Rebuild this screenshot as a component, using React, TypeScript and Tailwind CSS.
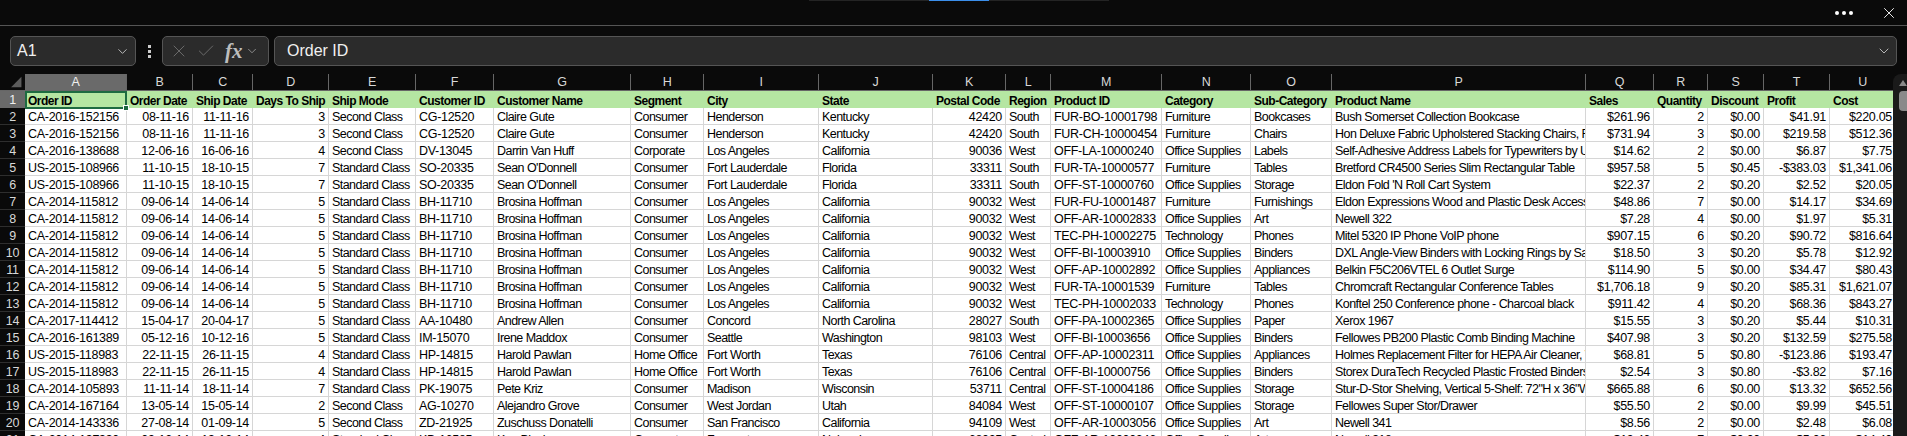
import { Check, ChevronDown, X } from "lucide-react";

const columns = [
  { label: "A", width: "w-[102px]" },
  { label: "B", width: "w-[66px]" },
  { label: "C", width: "w-[60px]" },
  { label: "D", width: "w-[76px]" },
  { label: "E", width: "w-[87px]" },
  { label: "F", width: "w-[78px]" },
  { label: "G", width: "w-[137px]" },
  { label: "H", width: "w-[73px]" },
  { label: "I", width: "w-[115px]" },
  { label: "J", width: "w-[114px]" },
  { label: "K", width: "w-[73px]" },
  { label: "L", width: "w-[45px]" },
  { label: "M", width: "w-[111px]" },
  { label: "N", width: "w-[89px]" },
  { label: "O", width: "w-[81px]" },
  { label: "P", width: "w-[254px]" },
  { label: "Q", width: "w-[68px]" },
  { label: "R", width: "w-[54px]" },
  { label: "S", width: "w-[56px]" },
  { label: "T", width: "w-[66px]" },
  { label: "U", width: "w-[66px]" },
];

const headers = [
  "Order ID", "Order Date", "Ship Date", "Days To Ship", "Ship Mode", "Customer ID", "Customer Name",
  "Segment", "City", "State", "Postal Code", "Region", "Product ID", "Category", "Sub-Category",
  "Product Name", "Sales", "Quantity", "Discount", "Profit", "Cost",
];

// columns that hold dates and numbers sit on the right of the cell
const rightAligned = [1, 2, 3, 10, 16, 17, 18, 19, 20];
const wordColumns = [4, 6, 7, 8, 9, 11, 13, 14, 15];

function cellClass(c: number) {
  if (rightAligned.includes(c)) {
    return "overflow-hidden whitespace-nowrap border-b border-r border-[#d6d6d6] bg-white px-[3px] pt-[2px] text-right";
  }
  if (wordColumns.includes(c)) {
    return "overflow-hidden whitespace-nowrap border-b border-r border-[#d6d6d6] bg-white px-[3px] pt-[2px] tracking-[-0.55px]";
  }
  return "overflow-hidden whitespace-nowrap border-b border-r border-[#d6d6d6] bg-white px-[3px] pt-[2px]";
}

const rows = [
  "CA-2016-152156|08-11-16|11-11-16|3|Second Class|CG-12520|Claire Gute|Consumer|Henderson|Kentucky|42420|South|FUR-BO-10001798|Furniture|Bookcases|Bush Somerset Collection Bookcase|$261.96|2|$0.00|$41.91|$220.05",
  "CA-2016-152156|08-11-16|11-11-16|3|Second Class|CG-12520|Claire Gute|Consumer|Henderson|Kentucky|42420|South|FUR-CH-10000454|Furniture|Chairs|Hon Deluxe Fabric Upholstered Stacking Chairs, Rounded Back|$731.94|3|$0.00|$219.58|$512.36",
  "CA-2016-138688|12-06-16|16-06-16|4|Second Class|DV-13045|Darrin Van Huff|Corporate|Los Angeles|California|90036|West|OFF-LA-10000240|Office Supplies|Labels|Self-Adhesive Address Labels for Typewriters by Universal|$14.62|2|$0.00|$6.87|$7.75",
  "US-2015-108966|11-10-15|18-10-15|7|Standard Class|SO-20335|Sean O'Donnell|Consumer|Fort Lauderdale|Florida|33311|South|FUR-TA-10000577|Furniture|Tables|Bretford CR4500 Series Slim Rectangular Table|$957.58|5|$0.45|-$383.03|$1,341.06",
  "US-2015-108966|11-10-15|18-10-15|7|Standard Class|SO-20335|Sean O'Donnell|Consumer|Fort Lauderdale|Florida|33311|South|OFF-ST-10000760|Office Supplies|Storage|Eldon Fold 'N Roll Cart System|$22.37|2|$0.20|$2.52|$20.05",
  "CA-2014-115812|09-06-14|14-06-14|5|Standard Class|BH-11710|Brosina Hoffman|Consumer|Los Angeles|California|90032|West|FUR-FU-10001487|Furniture|Furnishings|Eldon Expressions Wood and Plastic Desk Accessories|$48.86|7|$0.00|$14.17|$34.69",
  "CA-2014-115812|09-06-14|14-06-14|5|Standard Class|BH-11710|Brosina Hoffman|Consumer|Los Angeles|California|90032|West|OFF-AR-10002833|Office Supplies|Art|Newell 322|$7.28|4|$0.00|$1.97|$5.31",
  "CA-2014-115812|09-06-14|14-06-14|5|Standard Class|BH-11710|Brosina Hoffman|Consumer|Los Angeles|California|90032|West|TEC-PH-10002275|Technology|Phones|Mitel 5320 IP Phone VoIP phone|$907.15|6|$0.20|$90.72|$816.64",
  "CA-2014-115812|09-06-14|14-06-14|5|Standard Class|BH-11710|Brosina Hoffman|Consumer|Los Angeles|California|90032|West|OFF-BI-10003910|Office Supplies|Binders|DXL Angle-View Binders with Locking Rings by Samsill|$18.50|3|$0.20|$5.78|$12.92",
  "CA-2014-115812|09-06-14|14-06-14|5|Standard Class|BH-11710|Brosina Hoffman|Consumer|Los Angeles|California|90032|West|OFF-AP-10002892|Office Supplies|Appliances|Belkin F5C206VTEL 6 Outlet Surge|$114.90|5|$0.00|$34.47|$80.43",
  "CA-2014-115812|09-06-14|14-06-14|5|Standard Class|BH-11710|Brosina Hoffman|Consumer|Los Angeles|California|90032|West|FUR-TA-10001539|Furniture|Tables|Chromcraft Rectangular Conference Tables|$1,706.18|9|$0.20|$85.31|$1,621.07",
  "CA-2014-115812|09-06-14|14-06-14|5|Standard Class|BH-11710|Brosina Hoffman|Consumer|Los Angeles|California|90032|West|TEC-PH-10002033|Technology|Phones|Konftel 250 Conference phone - Charcoal black|$911.42|4|$0.20|$68.36|$843.27",
  "CA-2017-114412|15-04-17|20-04-17|5|Standard Class|AA-10480|Andrew Allen|Consumer|Concord|North Carolina|28027|South|OFF-PA-10002365|Office Supplies|Paper|Xerox 1967|$15.55|3|$0.20|$5.44|$10.31",
  "CA-2016-161389|05-12-16|10-12-16|5|Standard Class|IM-15070|Irene Maddox|Consumer|Seattle|Washington|98103|West|OFF-BI-10003656|Office Supplies|Binders|Fellowes PB200 Plastic Comb Binding Machine|$407.98|3|$0.20|$132.59|$275.58",
  "US-2015-118983|22-11-15|26-11-15|4|Standard Class|HP-14815|Harold Pawlan|Home Office|Fort Worth|Texas|76106|Central|OFF-AP-10002311|Office Supplies|Appliances|Holmes Replacement Filter for HEPA Air Cleaner, Very Large Room|$68.81|5|$0.80|-$123.86|$193.47",
  "US-2015-118983|22-11-15|26-11-15|4|Standard Class|HP-14815|Harold Pawlan|Home Office|Fort Worth|Texas|76106|Central|OFF-BI-10000756|Office Supplies|Binders|Storex DuraTech Recycled Plastic Frosted Binders|$2.54|3|$0.80|-$3.82|$7.16",
  "CA-2014-105893|11-11-14|18-11-14|7|Standard Class|PK-19075|Pete Kriz|Consumer|Madison|Wisconsin|53711|Central|OFF-ST-10004186|Office Supplies|Storage|Stur-D-Stor Shelving, Vertical 5-Shelf: 72\"H x 36\"W|$665.88|6|$0.00|$13.32|$652.56",
  "CA-2014-167164|13-05-14|15-05-14|2|Second Class|AG-10270|Alejandro Grove|Consumer|West Jordan|Utah|84084|West|OFF-ST-10000107|Office Supplies|Storage|Fellowes Super Stor/Drawer|$55.50|2|$0.00|$9.99|$45.51",
  "CA-2014-143336|27-08-14|01-09-14|5|Second Class|ZD-21925|Zuschuss Donatelli|Consumer|San Francisco|California|94109|West|OFF-AR-10003056|Office Supplies|Art|Newell 341|$8.56|2|$0.00|$2.48|$6.08",
  "CA-2014-137330|09-12-14|13-12-14|4|Standard Class|KB-16585|Ken Black|Corporate|Fremont|Nebraska|68025|Central|OFF-AR-10000246|Office Supplies|Art|Newell 318|$19.46|7|$0.00|$5.06|$14.40",
].map((row) => row.split("|"));

function TitleBar() {
  return (
    <div className="flex h-[26px] shrink-0 items-start border-b border-[#555555]">
      <div className="ml-[809px] h-px w-[300px] bg-[#242424]">
        <div className="ml-[120px] h-px w-[60px] bg-[#3b8eea]" />
      </div>
      <div className="ml-auto mr-[9px] flex h-[25px] items-center gap-[27px]">
        <div className="flex gap-[3px]">
          <span className="h-[4px] w-[4px] rounded-full bg-white" />
          <span className="h-[4px] w-[4px] rounded-full bg-white" />
          <span className="h-[4px] w-[4px] rounded-full bg-white" />
        </div>
        <X className="h-[18px] w-[18px] text-white" strokeWidth={1.2} />
      </div>
    </div>
  );
}

function FormulaBar() {
  return (
    <div className="mt-[10px] flex h-[30px] shrink-0 items-stretch px-[10px] text-[16px] text-[#f0f0f0]">
      <div className="flex w-[126px] items-center justify-between rounded-[5px] border border-[#555555] bg-[#2b2b2b] pl-[6px] pr-[5px]">
        <span>A1</span>
        <ChevronDown className="h-[15px] w-[15px] text-[#cccccc]" strokeWidth={1.4} />
      </div>
      <div className="flex w-[26px] flex-col items-center justify-center gap-[2px]">
        <span className="h-[3px] w-[3px] bg-[#cccccc]" />
        <span className="h-[3px] w-[3px] bg-[#cccccc]" />
        <span className="h-[3px] w-[3px] bg-[#cccccc]" />
      </div>
      <div className="flex w-[107px] items-center rounded-[5px] border border-[#555555] bg-[#2b2b2b] pl-[6px]">
        <X className="h-[20px] w-[20px] text-[#707070]" strokeWidth={1.1} />
        <Check className="ml-[7px] h-[20px] w-[20px] text-[#707070]" strokeWidth={1.1} />
        <span className="ml-[9px] font-['Liberation_Serif',serif] text-[21px] font-bold italic leading-none text-[#bdbdbd]">
          fx
        </span>
        <ChevronDown className="ml-[2px] h-[14px] w-[14px] text-[#aaaaaa]" strokeWidth={1.3} />
      </div>
      <div className="ml-[5px] flex flex-1 items-center justify-between rounded-[5px] border border-[#555555] bg-[#2b2b2b] pl-[12px] pr-[4px]">
        <span>Order ID</span>
        <ChevronDown className="h-[16px] w-[16px] text-[#cccccc]" strokeWidth={1.3} />
      </div>
    </div>
  );
}

function Sheet() {
  return (
    <div className="mt-[8px] flex min-h-0 flex-1">
      <div className="w-[1893px] overflow-hidden">
        <table className="w-[1896px] table-fixed border-separate border-spacing-0 text-[12.5px] leading-[14px] tracking-[-0.3px] text-black">
          <colgroup>
            <col className="w-[25px]" />
            {columns.map((col) => (
              <col key={col.label} className={col.width} />
            ))}
          </colgroup>
          <thead>
            <tr className="h-[17px]">
              <th className="border-b border-[#666666] p-0">
                <svg viewBox="0 0 25 17" className="block h-[16px] w-[25px]">
                  <path d="M22 3v11H11z" fill="#5c5c5c" />
                </svg>
              </th>
              {columns.map((col) => (
                <th
                  key={col.label}
                  className={
                    col.label === "A"
                      ? "border-b border-r border-[#666666] bg-[#6a6a6a] p-0 text-center font-normal text-[#f0f0f0]"
                      : "border-b border-r border-[#666666] p-0 text-center font-normal text-[#d8d8d8]"
                  }
                >
                  {col.label}
                </th>
              ))}
            </tr>
          </thead>
          <tbody>
            <tr className="h-[17px] bg-[#b5e6a2]">
              <th className="bg-[#6a6a6a] p-0 text-center font-normal text-[#f0f0f0]">1</th>
              {headers.map((text) => (
                <td
                  key={text}
                  className="overflow-hidden whitespace-nowrap px-[3px] pt-[3px] text-[12px] font-bold tracking-[-0.5px]"
                >
                  {text}
                </td>
              ))}
            </tr>
            {rows.map((row, r) => (
              <tr key={r} className="h-[17px]">
                <th className="border-b border-[#2e2e2e] bg-[#0a0a0a] p-0 pt-[2px] text-center font-normal text-[#d8d8d8]">
                  {r + 2}
                </th>
                {row.map((value, c) => (
                  <td key={c} className={cellClass(c)}>
                    {value}
                  </td>
                ))}
              </tr>
            ))}
          </tbody>
        </table>
      </div>
      <div className="flex-1 rounded-tl-lg bg-[#1a1a1a] pl-[6px] pt-[5px]">
        <svg viewBox="0 0 8 8" className="block h-[8px] w-[8px]">
          <path d="M4 1l4 6H0z" fill="#8a8a8a" />
        </svg>
        <div className="mt-[4px] h-[20px] w-[8px] rounded-l bg-[#8a8a8a]" />
      </div>
    </div>
  );
}

export default function App() {
  return (
    <div className="relative flex h-[436px] w-[1907px] flex-col overflow-hidden bg-[#0a0a0a] font-['Liberation_Sans',sans-serif]">
      <TitleBar />
      <FormulaBar />
      <Sheet />
      {/* A1 selection sits over the grid */}
      <div className="absolute left-[25px] top-[91px] h-[18px] w-[102px] border-2 border-[#1e6b41]">
        <div className="absolute -bottom-[4px] -right-[4px] h-[6px] w-[6px] border border-white bg-[#1e6b41]" />
      </div>
    </div>
  );
}
